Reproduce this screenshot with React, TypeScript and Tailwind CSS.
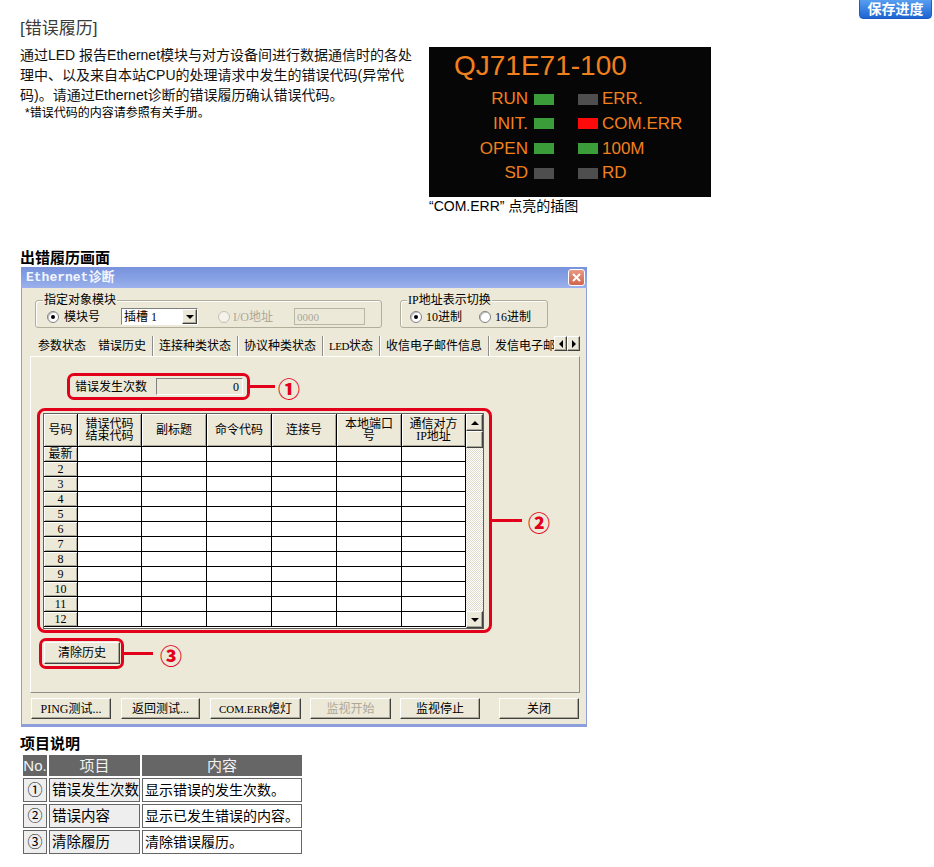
import React from 'react'

type Led = 'g' | 'r' | 'd'

const ledRows: [string, Led, Led, string][] = [
  ['RUN', 'g', 'd', 'ERR.'],
  ['INIT.', 'g', 'r', 'COM.ERR'],
  ['OPEN', 'g', 'g', '100M'],
  ['SD', 'd', 'd', 'RD'],
]

function LedBox({ c }: { c: Led }) {
  const cls = c === 'g' ? 'bg-[#3a9d3a]' : c === 'r' ? 'bg-[#ff0a0a]' : 'bg-[#4e4e4e]'
  return <span className={`block h-[11px] w-[20px] ${cls}`} />
}

function LedPanel() {
  return (
    <div className="h-[150px] w-[282px] bg-[#060606] pt-[3px] font-['Liberation_Sans',sans-serif] text-[#f2801d]">
      <div className="pl-[25px] text-[28px] leading-[31px]">QJ71E71-100</div>
      <div className="mt-[6px]">
        {ledRows.map(([l, a, b, r]) => (
          <div key={l} className="flex h-[24.67px] items-center text-[17px] leading-[20px]">
            <span className="w-[99px] text-right">{l}</span>
            <span className="ml-[6px]">
              <LedBox c={a} />
            </span>
            <span className="ml-[24px]">
              <LedBox c={b} />
            </span>
            <span className="ml-[4px]">{r}</span>
          </div>
        ))}
      </div>
    </div>
  )
}

function Radio({ checked, disabled }: { checked?: boolean; disabled?: boolean }) {
  return (
    <span
      className={`flex h-[12px] w-[12px] flex-none items-center justify-center rounded-full border ${
        disabled ? 'border-[#c4c1b4] bg-[#f4f2ea]' : 'border-[#808080] bg-white shadow-[inset_1px_1px_0_#c0c0c0]'
      }`}
    >
      {checked && <span className="h-[4px] w-[4px] rounded-full bg-black" />}
    </span>
  )
}

function Tri({ dir }: { dir: 'up' | 'down' | 'left' | 'right' }) {
  const pts = {
    up: '0,5 4,1 8,5',
    down: '0,1 8,1 4,5',
    left: '5,0 5,8 1,4',
    right: '1,0 1,8 5,4',
  }[dir]
  const vertical = dir === 'up' || dir === 'down'
  return (
    <svg width={vertical ? 8 : 6} height={vertical ? 6 : 8} viewBox={vertical ? '0 0 8 6' : '0 0 6 8'}>
      <polygon points={pts} fill="#000" />
    </svg>
  )
}

function Btn({ children, className = '', disabled }: { children?: React.ReactNode; className?: string; disabled?: boolean }) {
  return (
    <div
      className={`flex flex-none items-center justify-center overflow-hidden border border-b-[#404040] border-l-white border-r-[#404040] border-t-white bg-[#ece9d8] text-[12px] leading-[14px] shadow-[inset_-1px_-1px_0_#aca899] ${
        disabled ? 'text-[#aca899]' : 'text-black'
      } ${className}`}
    >
      {children}
    </div>
  )
}

function Circled({ n }: { n: string }) {
  return (
    <span className="block font-['Noto_Sans_CJK_SC',sans-serif] text-[22px] font-black leading-[22px] text-[#e3001b]">
      {n}
    </span>
  )
}

const tabs = ['参数状态', '错误历史', '连接种类状态', '协议种类状态', 'LED状态', '收信电子邮件信息', '发信电子邮件信息']

const cols = ['w-[34px]', 'w-[64px]', 'w-[65px]', 'w-[65px]', 'w-[65px]', 'w-[65px]', 'w-[64px]']
const rowLabels = ['最新', '2', '3', '4', '5', '6', '7', '8', '9', '10', '11', '12']

function Grid() {
  const head: React.ReactNode[] = [
    '号码',
    <>错误代码<br />结束代码</>,
    '副标题',
    '命令代码',
    '连接号',
    <>本地端口<br />号</>,
    <>通信对方<br />IP地址</>,
  ]
  return (
    <div className="flex h-[216px] w-[441px] overflow-hidden border border-[#5f5f5f] bg-white">
      <div className="flex flex-col">
        <div className="flex h-[33px] flex-none">
          {head.map((h, i) => (
            <div
              key={i}
              className={`${cols[i]} flex items-center justify-center border-b border-r border-black bg-[#ece9d8] text-center text-[12px] leading-[12.5px] shadow-[inset_1px_1px_0_#fff,inset_-1px_-1px_0_#aca899]`}
            >
              <span>{h}</span>
            </div>
          ))}
        </div>
        {rowLabels.map((r) => (
          <div key={r} className="flex h-[15px] flex-none">
            {cols.map((c, i) =>
              i === 0 ? (
                <div
                  key={i}
                  className={`${c} flex items-center justify-center border-b border-r border-black bg-[#ece9d8] text-[12px] leading-[12px] shadow-[inset_1px_1px_0_#fff,inset_-1px_-1px_0_#aca899]`}
                >
                  {r}
                </div>
              ) : (
                <div key={i} className={`${c} border-b border-r border-black bg-white`} />
              )
            )}
          </div>
        ))}
      </div>
      <div className="flex w-[17px] flex-col">
        <Btn className="h-[17px] w-[17px]">
          <Tri dir="up" />
        </Btn>
        <Btn className="h-[17px] w-[17px]" />
        <div className="flex-1 bg-[repeating-conic-gradient(#ffffff_0%_25%,#dedbcd_0%_50%)] bg-[length:2px_2px]" />
        <Btn className="h-[17px] w-[17px]">
          <Tri dir="down" />
        </Btn>
      </div>
    </div>
  )
}

function Dialog() {
  return (
    <div className="ml-[1px] flex h-[460px] w-[566px] flex-col overflow-hidden font-['Liberation_Serif','Noto_Sans_CJK_SC',serif]">
      <div className="flex h-[21px] flex-none items-center justify-between bg-gradient-to-b from-[#7892dc] via-[#86a0e4] to-[#9cb1ec] pl-[5px] pr-[2px]">
        <span className="font-['Liberation_Mono','Noto_Sans_CJK_SC',monospace] text-[13px] font-bold leading-[16px] text-[#f2f5fd]">
          Ethernet诊断
        </span>
        <span className="flex h-[17px] w-[17px] items-center justify-center rounded-[3px] border border-white bg-gradient-to-b from-[#e79a85] to-[#cf654b]">
          <svg width="9" height="9" viewBox="0 0 9 9">
            <path d="M1 1 L8 8 M8 1 L1 8" stroke="#fff" strokeWidth="2" />
          </svg>
        </span>
      </div>
      <div className="h-[439px] flex-none overflow-hidden border-x border-b-[3px] border-[#8d9fdb] bg-[#ece9d8] text-[12px] leading-[14px]">
        {/* group boxes */}
        <div className="ml-[13px] mt-[12px] flex h-[28px] gap-[18px]">
          <div className="relative flex h-[28px] w-[347px] items-center rounded-[3px] border border-[#b2ae9c] pl-[11px] pt-[5px] shadow-[inset_1px_1px_0_#fff]">
            <span className="absolute left-[7px] top-[-9px] bg-[#ece9d8] px-[1px] leading-[16px]">指定对象模块</span>
            <Radio checked />
            <span className="ml-[5px]">模块号</span>
            <div className="ml-[21px] flex h-[17px] w-[77px] items-center border border-b-white border-l-[#808080] border-r-white border-t-[#808080] bg-white">
              <span className="flex-1 pl-[2px]">插槽 1</span>
              <Btn className="h-[15px] w-[15px]">
                <Tri dir="down" />
              </Btn>
            </div>
            <span className="ml-[20px]">
              <Radio disabled />
            </span>
            <span className="ml-[3px] text-[#aca899]">I/O地址</span>
            <div className="ml-[21px] flex h-[17px] w-[71px] items-center border border-[#b9b6a8] bg-[#ece9d8] pl-[2px] text-[11px] text-[#aaa79c]">
              0000
            </div>
          </div>
          <div className="relative flex h-[28px] w-[148px] items-center rounded-[3px] border border-[#b2ae9c] pl-[9px] pt-[5px] shadow-[inset_1px_1px_0_#fff]">
            <span className="absolute left-[6px] top-[-9px] bg-[#ece9d8] px-[1px] leading-[16px]">IP地址表示切换</span>
            <Radio checked />
            <span className="ml-[4px]">10进制</span>
            <span className="ml-[17px]">
              <Radio />
            </span>
            <span className="ml-[4px]">16进制</span>
          </div>
        </div>

        {/* tabs */}
        <div className="ml-[10px] mt-[8px] flex h-[20px] w-[548px]">
          <div className="flex flex-1 overflow-hidden">
            {tabs.map((t, i) => (
              <div
                key={t}
                className={`flex h-[20px] flex-none items-center whitespace-nowrap px-[6px] ${
                  i === 0 ? '' : 'border-r border-[#8d8d8d] shadow-[1px_0_0_#fff]'
                }`}
              >
                {t === 'LED状态' ? (
                  <>
                    <span className="text-[11px] tracking-[-0.5px]">LED</span>状态
                  </>
                ) : (
                  t
                )}
              </div>
            ))}
          </div>
          <div className="flex flex-none items-start">
            <Btn className="h-[15px] w-[13px]">
              <Tri dir="left" />
            </Btn>
            <Btn className="h-[15px] w-[13px]">
              <Tri dir="right" />
            </Btn>
          </div>
        </div>

        {/* panel */}
        <div className="ml-[8px] h-[337px] w-[550px] border border-b-[#8d8d8d] border-l-white border-r-[#8d8d8d] border-t-white">
          <div className="ml-[36px] mt-[16px] flex h-[27px] items-center">
            <div className="flex h-[27px] w-[183px] items-center rounded-[7px] border-[3px] border-[#e3001b] pl-[5px]">
              <span className="w-[72px]">错误发生次数</span>
              <div className="ml-[9px] flex h-[17px] w-[87px] items-center justify-end border border-b-white border-l-[#808080] border-r-white border-t-[#808080] pr-[3px]">
                0
              </div>
            </div>
            <span className="h-[3px] w-[25px] bg-[#e3001b]" />
            <span className="ml-[3px]">
              <Circled n="①" />
            </span>
          </div>

          <div className="ml-[6px] mt-[8px] flex h-[225px] items-center">
            <div className="h-[225px] w-[455px] rounded-[8px] border-[3px] border-[#e3001b] pl-[3px] pt-[2px]">
              <Grid />
            </div>
            <span className="h-[3px] w-[30px] bg-[#e3001b]" />
            <span className="ml-[6px]">
              <Circled n="②" />
            </span>
          </div>

          <div className="ml-[8px] mt-[5px] flex h-[31px] items-center">
            <div className="h-[31px] w-[85px] rounded-[7px] border-[3px] border-[#e3001b] pl-[2px] pt-[1px]">
              <Btn className="h-[22px] w-[76px]">清除历史</Btn>
            </div>
            <span className="h-[3px] w-[29px] bg-[#e3001b]" />
            <span className="ml-[7px]">
              <Circled n="③" />
            </span>
          </div>
        </div>

        {/* bottom buttons */}
        <div className="ml-[9px] mt-[5px] flex h-[21px]">
          <Btn className="h-[21px] w-[80px]">PING测试...</Btn>
          <Btn className="ml-[10px] h-[21px] w-[79px]">返回测试...</Btn>
          <Btn className="ml-[10px] h-[21px] w-[91px]">
            <span className="text-[11px]">COM.ERR</span>熄灯
          </Btn>
          <Btn className="ml-[9px] h-[21px] w-[81px]" disabled>
            监视开始
          </Btn>
          <Btn className="ml-[9px] h-[21px] w-[80px]">监视停止</Btn>
          <Btn className="ml-[19px] h-[21px] w-[80px]">关闭</Btn>
        </div>
      </div>
    </div>
  )
}

const items = [
  ['①', '错误发生次数', '显示错误的发生次数。'],
  ['②', '错误内容', '显示已发生错误的内容。'],
  ['③', '清除履历', '清除错误履历。'],
]

export default function App() {
  return (
    <div className="relative h-[867px] w-[934px] overflow-hidden bg-white font-['Liberation_Sans','Noto_Sans_CJK_SC',sans-serif] text-black">
      <div className="absolute right-[2px] top-[-3px] flex h-[22px] w-[73px] items-center justify-center rounded-[4px] border border-[#1d5bbf] bg-gradient-to-b from-[#5ea4f4] to-[#1c64d2] pt-[3px] text-[14px] font-bold text-white">
        保存进度
      </div>

      <div className="pl-5 pt-[18px]">
        <h2 className="h-[22px] text-[17px] font-normal leading-[22px] text-[#3a3a3a]">[错误履历]</h2>
        <div className="mt-[5px] flex h-[169px]">
          <div className="w-[409px]">
            <p className="text-[14px] leading-[20px] text-[#111]">
              通过LED 报告Ethernet模块与对方设备间进行数据通信时的各处
              <br />
              理中、以及来自本站CPU的处理请求中发生的错误代码(异常代
              <br />
              码)。请通过Ethernet诊断的错误履历确认错误代码。
            </p>
            <p className="ml-[5px] text-[12px] leading-[16px]">*错误代码的内容请参照有关手册。</p>
          </div>
          <div className="pt-[2px]">
            <LedPanel />
            <p className="mt-[1px] h-[16px] text-[14px] leading-[16px]">“COM.ERR” 点亮的插图</p>
          </div>
        </div>

        <h3 className="mt-[35px] h-[18px] text-[15px] font-bold leading-[18px]">出错履历画面</h3>
        <Dialog />

        <h3 className="mt-[8px] h-[18px] text-[15px] font-bold leading-[18px]">项目说明</h3>
        <table className="ml-[1px] border-separate border-spacing-[2px] leading-[20px]">
          <thead>
            <tr>
              <th className="h-[21px] w-[24px] bg-[#666] p-0 text-[15px] font-normal leading-[20px] text-[#f2f2f2]">No.</th>
              <th className="h-[21px] w-[91px] bg-[#666] p-0 text-[15px] font-normal leading-[20px] text-[#f2f2f2]">项目</th>
              <th className="h-[21px] w-[160px] bg-[#666] p-0 text-[15px] font-normal leading-[20px] text-[#f2f2f2]">内容</th>
            </tr>
          </thead>
          <tbody>
            {items.map(([n, a, b]) => (
              <tr key={n}>
                <td className="h-[24px] border border-[#666] bg-[#eeeeee] p-0 text-center text-[15px] leading-[20px]">{n}</td>
                <td className="h-[24px] whitespace-nowrap border border-[#666] bg-[#eeeeee] p-0 pl-[2px] text-[14.5px] leading-[20px]">
                  {a}
                </td>
                <td className="h-[24px] whitespace-nowrap border border-[#666] bg-white p-0 pl-[2px] text-[14px] leading-[20px]">{b}</td>
              </tr>
            ))}
          </tbody>
        </table>
      </div>
    </div>
  )
}
